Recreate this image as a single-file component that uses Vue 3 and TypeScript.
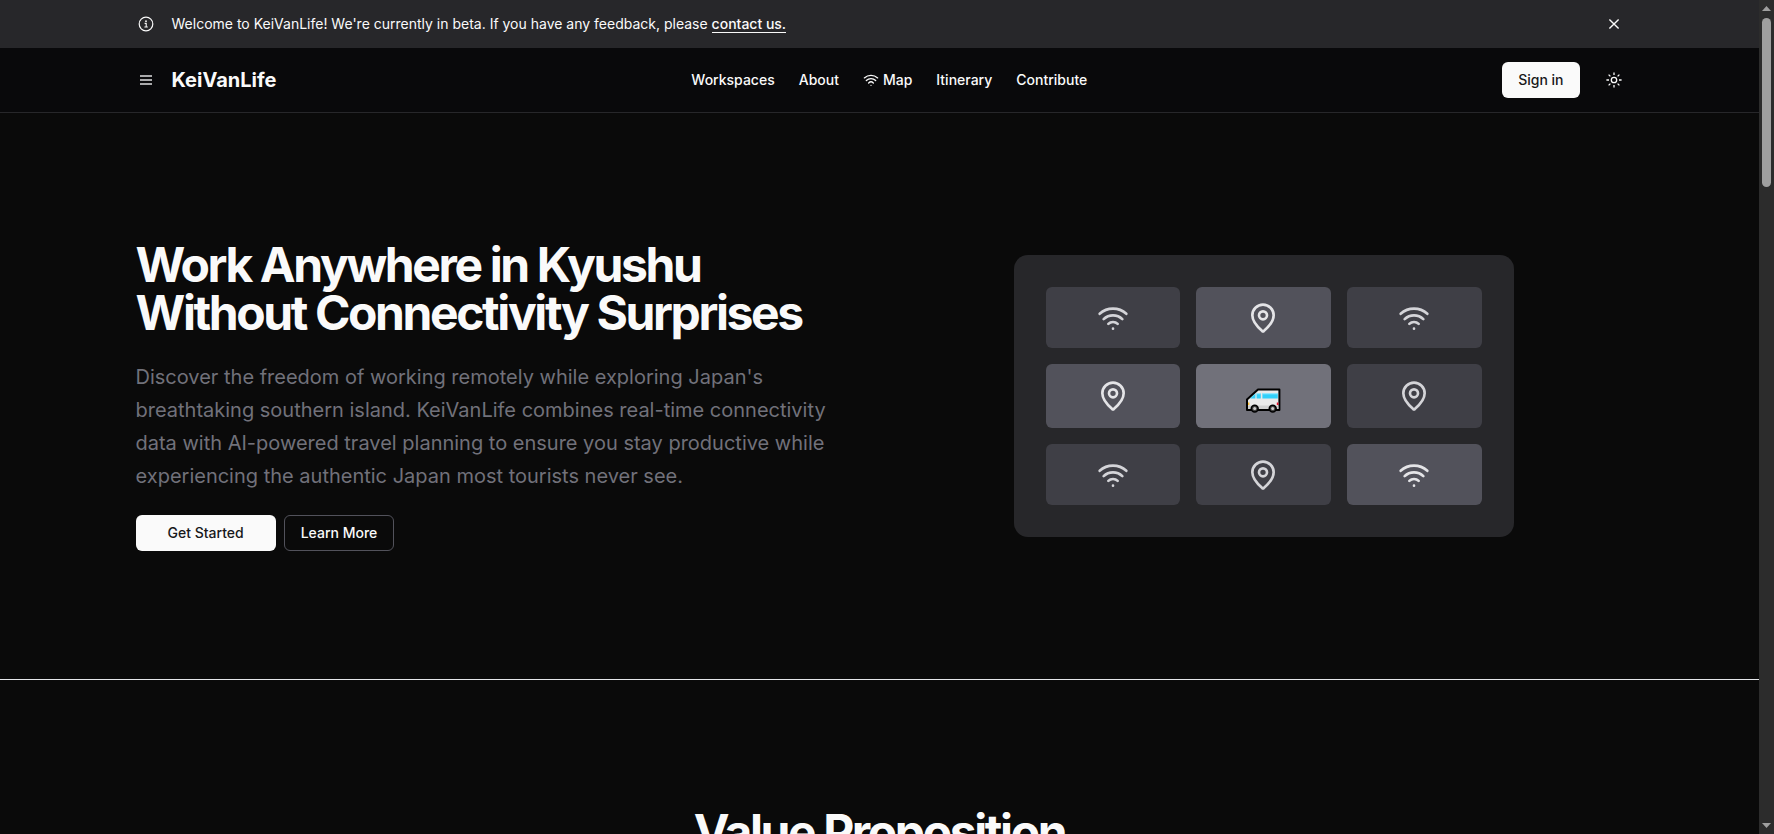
<script setup lang="ts">
type Tile = { icon: 'wifi' | 'pin' | 'van'; tone: 'low' | 'mid' | 'high' }

const links: { label: string; wifi?: boolean }[] = [
  { label: 'Workspaces' },
  { label: 'About' },
  { label: 'Map', wifi: true },
  { label: 'Itinerary' },
  { label: 'Contribute' },
]

const tiles: Tile[] = [
  { icon: 'wifi', tone: 'low' },
  { icon: 'pin', tone: 'mid' },
  { icon: 'wifi', tone: 'low' },
  { icon: 'pin', tone: 'mid' },
  { icon: 'van', tone: 'high' },
  { icon: 'pin', tone: 'low' },
  { icon: 'wifi', tone: 'low' },
  { icon: 'pin', tone: 'low' },
  { icon: 'wifi', tone: 'mid' },
]
</script>

<template>
  <div class="window">
    <div class="page">
      <div class="banner">
        <div class="container bar">
          <div class="lead">
            <span class="slot">
              <svg class="i16" viewBox="0 0 16 16" fill="none" aria-hidden="true">
                <circle cx="8" cy="8" r="6.8" stroke="currentColor" stroke-width="1.2" />
                <circle cx="8" cy="5.2" r="0.9" fill="currentColor" />
                <path d="M6.6 7.4H8.2V11M6.4 11H9.8" stroke="currentColor" stroke-width="1.1" />
              </svg>
            </span>
            <p class="notice">
              Welcome to KeiVanLife! We're currently in beta. If you have any feedback, please
              <a href="#contact">contact us.</a>
            </p>
          </div>
          <button class="slot" type="button" aria-label="Dismiss">
            <svg class="i16" viewBox="0 0 16 16" fill="none" aria-hidden="true">
              <path d="M3.4 3.4L12.6 12.6M12.6 3.4L3.4 12.6" stroke="currentColor" stroke-width="1.4" />
            </svg>
          </button>
        </div>
      </div>

      <header class="header">
        <div class="container bar">
          <div class="lead">
            <button class="slot menu" type="button" aria-label="Open menu">
              <svg class="i16" viewBox="0 0 16 16" aria-hidden="true">
                <path d="M2 4h12M2 8h12M2 12h12" stroke="currentColor" stroke-width="2" />
              </svg>
            </button>
            <a class="brand" href="#home">KeiVanLife</a>
          </div>
          <nav class="nav">
            <a v-for="link in links" :key="link.label" :href="'#' + link.label.toLowerCase()">
              <svg v-if="link.wifi" class="i16 stroke" viewBox="0 0 24 24" aria-hidden="true">
                <path d="M12 20h.01M2 8.82a15 15 0 0 1 20 0M5 12.859a10 10 0 0 1 14 0M8.5 16.429a5 5 0 0 1 7 0" />
              </svg>
              {{ link.label }}
            </a>
          </nav>
          <div class="actions">
            <button class="btn solid" type="button">Sign in</button>
            <button class="slot" type="button" aria-label="Toggle theme">
              <svg class="i16" viewBox="0 0 16 16" fill="none" aria-hidden="true">
                <circle cx="8" cy="8" r="2.7" stroke="currentColor" stroke-width="1.3" />
                <path
                  d="M8 0.4V3M8 13V15.6M0.4 8H3M13 8H15.6M2.6 2.6L4.4 4.4M11.6 11.6L13.4 13.4M13.4 2.6L11.6 4.4M4.4 11.6L2.6 13.4"
                  stroke="currentColor"
                  stroke-width="1.3"
                />
              </svg>
            </button>
          </div>
        </div>
      </header>

      <main>
        <section class="hero">
          <div class="container split">
            <div class="copy">
              <h1>Work Anywhere in Kyushu<br />Without Connectivity Surprises</h1>
              <p class="intro">
                Discover the freedom of working remotely while exploring Japan's<br />
                breathtaking southern island. KeiVanLife combines real-time connectivity<br />
                data with AI-powered travel planning to ensure you stay productive while<br />
                experiencing the authentic Japan most tourists never see.
              </p>
              <div class="buttons">
                <button class="btn solid wide" type="button">Get Started</button>
                <button class="btn outline" type="button">Learn More</button>
              </div>
            </div>
            <div class="card">
              <div v-for="(tile, i) in tiles" :key="i" class="tile" :class="[tile.tone, { tall: i > 2 && i < 6 }]">
                <svg v-if="tile.icon === 'wifi'" class="i32 stroke" viewBox="0 0 24 24" aria-hidden="true">
                  <path d="M12 20h.01M2 8.82a15 15 0 0 1 20 0M5 12.859a10 10 0 0 1 14 0M8.5 16.429a5 5 0 0 1 7 0" />
                </svg>
                <svg v-else-if="tile.icon === 'pin'" class="i32 stroke" viewBox="0 0 24 24" aria-hidden="true">
                  <path d="M20 10c0 4.993-5.539 10.193-7.399 11.799a1 1 0 0 1-1.202 0C9.539 20.193 4 14.993 4 10a8 8 0 0 1 16 0" />
                  <circle cx="12" cy="10" r="3" />
                </svg>
                <svg v-else class="van" viewBox="0 0 36 36" role="img" aria-label="Van">
                  <path d="M2 32V21.5L13 11.6H34.4V32Z" fill="#e9e9e9" stroke="#000" stroke-width="2" stroke-linejoin="round" />
                  <path d="M3 27.5H33.4V31H3Z" fill="#d0d0d0" />
                  <path d="M5 20.6L10.4 15.6V20.6Z" fill="#32d0fa" />
                  <path d="M11.6 15.2H15.8V20.6H11.6ZM17.4 15.2H32.8V20.6H17.4Z" fill="#32d0fa" />
                  <path d="M11.6 15.2H15.8V16.2H11.6ZM17.4 15.2H32.8V16.2H17.4Z" fill="#a5ecff" />
                  <path d="M3 24.5H4.4V27H3Z" fill="#ffbf2e" />
                  <path d="M31.8 24.5H33.4V27H31.8Z" fill="#e8112d" />
                  <circle cx="9.7" cy="30.6" r="3.4" fill="#444" stroke="#000" stroke-width="1.6" />
                  <circle cx="9.7" cy="30.6" r="1.5" fill="#ccc" />
                  <circle cx="27.7" cy="30.6" r="3.4" fill="#444" stroke="#000" stroke-width="1.6" />
                  <circle cx="27.7" cy="30.6" r="1.5" fill="#ccc" />
                </svg>
              </div>
            </div>
          </div>
        </section>
        <section class="values">
          <h2>Value Proposition</h2>
        </section>
      </main>
    </div>

    <div class="track" aria-hidden="true">
      <svg class="arrow" viewBox="0 0 9 5"><path d="M4.5 0L9 5H0Z" /></svg>
      <div class="thumb"></div>
      <svg class="arrow down" viewBox="0 0 9 5"><path d="M0 0H9L4.5 5Z" /></svg>
    </div>
  </div>
</template>

<style>
html,
body {
  margin: 0;
  background: #0a0a0a;
}
</style>

<style scoped>
* {
  box-sizing: border-box;
}
.window {
  display: flex;
  height: 100vh;
  overflow: hidden;
  color: #fafafa;
  font-family: Inter, 'Liberation Sans', sans-serif;
  font-size: 14px;
  line-height: 20px;
}
.page {
  flex: 1;
  min-width: 0;
  overflow: hidden;
}
h1,
h2,
p {
  margin: 0;
}
a {
  color: inherit;
  text-decoration: none;
}
button {
  border: 0;
  padding: 0;
  background: none;
  color: inherit;
  font: inherit;
  cursor: pointer;
}
svg {
  display: block;
  flex: none;
}
.container {
  width: 100%;
  max-width: 1536px;
  margin: 0 auto;
  padding: 0 24px;
}
.bar {
  display: flex;
  align-items: center;
  justify-content: space-between;
}
.banner {
  background: #27272a;
}
.banner .bar {
  height: 48px;
}
.lead {
  display: flex;
  align-items: center;
  gap: 16px;
}
.slot {
  display: flex;
  align-items: center;
  justify-content: center;
  width: 20px;
  height: 20px;
}
.i16 {
  width: 16px;
  height: 16px;
}
.i32 {
  width: 32px;
  height: 32px;
}
.stroke {
  fill: none;
  stroke: currentColor;
  stroke-width: 2;
  stroke-linecap: round;
  stroke-linejoin: round;
}
.notice a {
  font-weight: 500;
  border-bottom: 1px solid #fafafa;
}
.header {
  background: #09090b;
  border-bottom: 1px solid #27272a;
}
.header .bar {
  height: 64px;
}
.menu {
  color: #a9a9ab;
}
.brand {
  font-size: 20px;
  line-height: 28px;
  font-weight: 700;
}
.nav {
  display: flex;
  gap: 24px;
  font-weight: 500;
}
.nav a {
  display: flex;
  align-items: center;
  gap: 4px;
}
.actions {
  display: flex;
  align-items: center;
  gap: 24px;
}
.btn {
  height: 36px;
  padding: 0 16px;
  border-radius: 6px;
  font-weight: 500;
}
.solid {
  background: #fafafa;
  color: #18181b;
}
.wide {
  padding: 0 32px;
}
.outline {
  border: 1px solid #52525b;
}
.hero {
  padding: 128px 0;
  border-bottom: 1px solid #e5e7eb;
}
.split {
  display: grid;
  grid-template-columns: minmax(0, 1fr) minmax(0, 1fr);
  gap: 48px;
  align-items: center;
}
.copy {
  white-space: nowrap;
}
h1,
h2 {
  font-size: 48px;
  line-height: 48px;
  font-weight: 700;
  letter-spacing: -0.05em;
}
.intro {
  margin: 24px 0 22px;
  color: #71717a;
  font-size: 20px;
  line-height: 33px;
}
.buttons {
  display: flex;
  gap: 8px;
}
.card {
  display: grid;
  grid-template-columns: repeat(3, 1fr);
  gap: 16px;
  width: 100%;
  max-width: 500px;
  margin: 0 auto;
  padding: 32px;
  border-radius: 14px;
  background: #27272a;
}
.tile {
  display: flex;
  align-items: center;
  justify-content: center;
  height: 61px;
  border-radius: 6px;
}
.tall {
  height: 64px;
}
.low {
  background: #3f3f46;
  color: #d4d4d8;
}
.mid {
  background: #52525b;
  color: #e4e4e7;
}
.high {
  background: #71717a;
}
.van {
  width: 36px;
  height: 36px;
}
.values {
  padding: 128px 0;
  text-align: center;
}
.track {
  display: flex;
  flex-direction: column;
  align-items: center;
  width: 15px;
  padding: 6px 0;
  background: #2c2c2c;
}
.arrow {
  width: 9px;
  height: 5px;
  fill: #9f9f9f;
}
.down {
  margin-top: auto;
}
.thumb {
  width: 9px;
  height: 169px;
  margin-top: 7px;
  border-radius: 5px;
  background: #9f9f9f;
}
</style>
